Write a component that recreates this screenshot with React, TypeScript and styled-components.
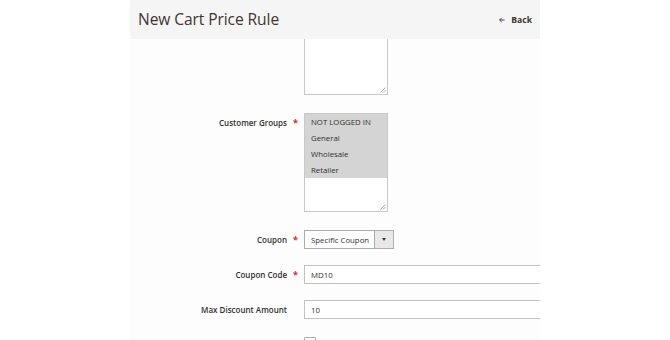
import React from "react";
import styled, { createGlobalStyle } from "styled-components";

const Global = createGlobalStyle`
  html, body { margin: 0; padding: 0; background: #ffffff; }
  body { font-family: "Open Sans", "DejaVu Sans", sans-serif; color: #303030; }
`;

const Page = styled.div`
  width: 670px;
  height: 340px;
  display: flex;
  justify-content: flex-start;
  padding-left: 130px;
  box-sizing: border-box;
  overflow: hidden;
`;

const Panel = styled.div`
  width: 410px;
  height: 340px;
  background: #fdfdfd;
  overflow: hidden;
  display: flex;
  flex-direction: column;
`;

const Header = styled.header`
  height: 39px;
  flex: none;
  background: #f5f5f5;
  display: flex;
  align-items: center;
  justify-content: space-between;
  padding: 0 8px 0 8px;
  box-sizing: border-box;
`;

const Title = styled.h1`
  margin: 0;
  font-size: 15.6px;
  font-weight: 400;
  color: #41362f;
  letter-spacing: -0.1px;
  line-height: 1;
`;

const BackLink = styled.a`
  display: flex;
  align-items: center;
  gap: 6px;
  font-size: 8.6px;
  font-weight: 700;
  color: #41362f;
  text-decoration: none;
`;

const Arrow = styled.svg`
  width: 6px;
  height: 6px;
`;

const Form = styled.div`
  display: flex;
  flex-direction: column;
`;

const Row = styled.div<{ $gap: number; $align?: string }>`
  display: grid;
  grid-template-columns: 174px 400px;
  align-items: ${(p) => p.$align || "center"};
  margin-top: ${(p) => p.$gap}px;
`;

const LabelCell = styled.div<{ $top?: number }>`
  display: flex;
  justify-content: flex-end;
  align-items: center;
  gap: 6px;
  padding-right: ${(p) => (p.$top !== undefined ? 6 : 17)}px;
  padding-top: ${(p) => p.$top || 0}px;
  font-size: 8px;
  font-weight: 600;
  color: #303030;
  box-sizing: border-box;
  white-space: nowrap;
`;

const Star = styled.span`
  color: #e22626;
  font-size: 9px;
  font-weight: 700;
  width: 5px;
  line-height: 1;
`;

const TextareaClip = styled.div`
  height: 56px;
  display: flex;
  align-items: flex-end;
  overflow: hidden;
`;

const Textarea = styled.div`
  position: relative;
  width: 84px;
  height: 80px;
  border: 1px solid #c8c8c8;
  background: #fff;
  box-sizing: border-box;
`;

const Grip = styled.svg`
  position: absolute;
  right: 1px;
  bottom: 1px;
  width: 6px;
  height: 6px;
`;

const Multi = styled.div`
  position: relative;
  width: 84px;
  height: 99px;
  border: 1px solid #c8c8c8;
  background: #fff;
  box-sizing: border-box;
  display: flex;
  flex-direction: column;
`;

const Option = styled.div<{ $selected?: boolean }>`
  height: 16px;
  display: flex;
  align-items: center;
  padding-left: 6px;
  font-size: 7.8px;
  color: #303030;
  background: ${(p) => (p.$selected ? "#d4d4d4" : "transparent")};
`;

const SelectBox = styled.div`
  width: 90px;
  height: 19px;
  display: flex;
  border: 1px solid #adadad;
  box-sizing: border-box;
  background: #fff;
`;

const SelectValue = styled.div`
  flex: 1;
  display: flex;
  align-items: center;
  padding-left: 6px;
  font-size: 7.8px;
  color: #303030;
`;

const SelectButton = styled.div`
  width: 18px;
  border-left: 1px solid #adadad;
  background: #e8e8e8;
  display: flex;
  align-items: center;
  justify-content: center;
`;

const Caret = styled.div`
  width: 0;
  height: 0;
  border-left: 2.5px solid transparent;
  border-right: 2.5px solid transparent;
  border-top: 3px solid #41362f;
`;

const Input = styled.div`
  width: 400px;
  height: 19px;
  border: 1px solid #c2c2c2;
  box-sizing: border-box;
  background: #fff;
  display: flex;
  align-items: center;
  padding-left: 6px;
  font-size: 7.8px;
  color: #303030;
`;

const Checkbox = styled.div`
  width: 12px;
  height: 12px;
  border: 1px solid #adadad;
  border-radius: 1px;
  box-sizing: border-box;
  background: #fff;
`;

const GripIcon = () => (
  <Grip viewBox="0 0 6 6">
    <line x1="5.5" y1="0.5" x2="0.5" y2="5.5" stroke="#9a9a9a" strokeWidth="0.8" />
    <line x1="5.5" y1="3" x2="3" y2="5.5" stroke="#9a9a9a" strokeWidth="0.8" />
  </Grip>
);

export default function App() {
  return (
    <>
      <Global />
      <Page>
        <Panel>
          <Header>
            <Title>New Cart Price Rule</Title>
            <BackLink href="#">
              <Arrow viewBox="0 0 6 6">
                <path d="M5.6 3H0.6M2.8 0.8L0.6 3L2.8 5.2" stroke="#41362f" strokeWidth="0.9" fill="none" />
              </Arrow>
              Back
            </BackLink>
          </Header>
          <Form>
            <Row $gap={0} $align="end">
              <LabelCell />
              <TextareaClip>
                <Textarea>
                  <GripIcon />
                </Textarea>
              </TextareaClip>
            </Row>
            <Row $gap={18} $align="start">
              <LabelCell $top={4}>
                Customer Groups <Star>*</Star>
              </LabelCell>
              <Multi>
                <Option $selected>NOT LOGGED IN</Option>
                <Option $selected>General</Option>
                <Option $selected>Wholesale</Option>
                <Option $selected>Retailer</Option>
                <GripIcon />
              </Multi>
            </Row>
            <Row $gap={18}>
              <LabelCell $top={0}>
                Coupon <Star>*</Star>
              </LabelCell>
              <SelectBox>
                <SelectValue>Specific Coupon</SelectValue>
                <SelectButton>
                  <Caret />
                </SelectButton>
              </SelectBox>
            </Row>
            <Row $gap={16}>
              <LabelCell $top={0}>
                Coupon Code <Star>*</Star>
              </LabelCell>
              <Input>MD10</Input>
            </Row>
            <Row $gap={16}>
              <LabelCell>Max Discount Amount</LabelCell>
              <Input>10</Input>
            </Row>
            <Row $gap={18}>
              <LabelCell />
              <Checkbox />
            </Row>
          </Form>
        </Panel>
      </Page>
    </>
  );
}
